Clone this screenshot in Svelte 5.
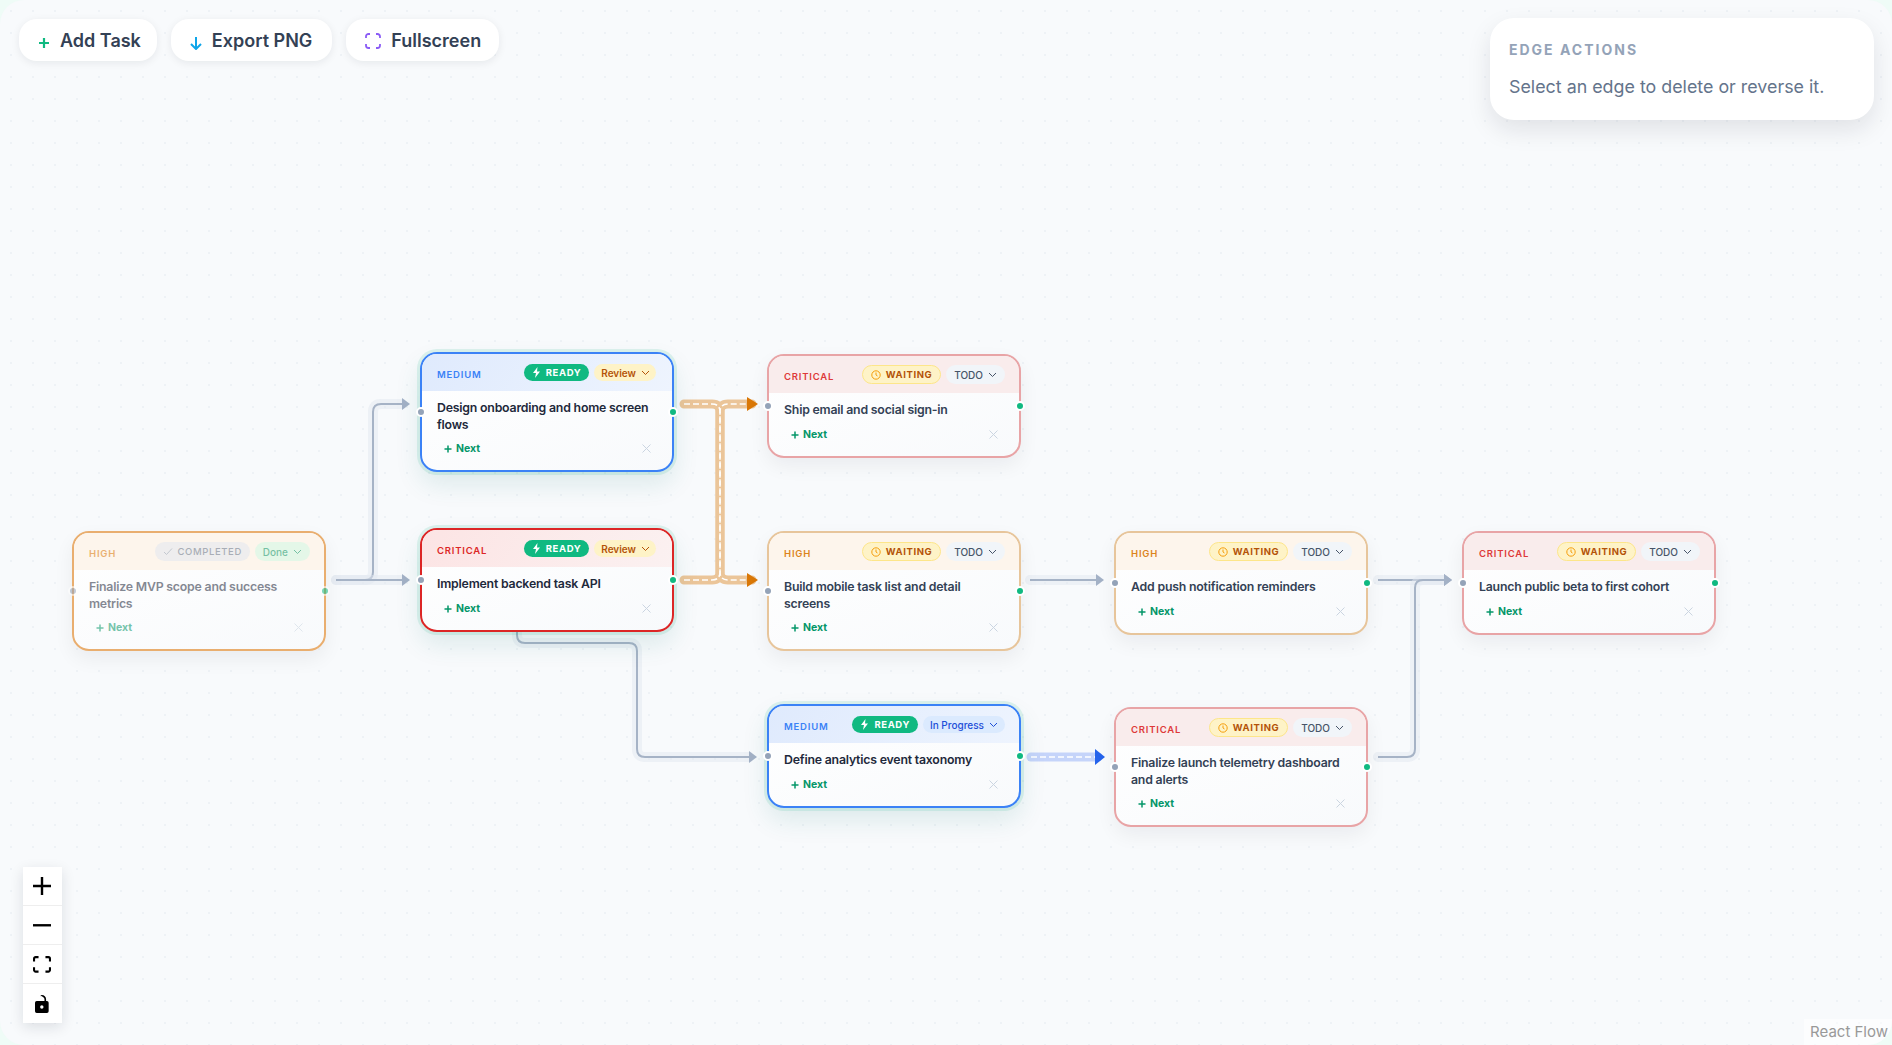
<script>
  // canvas contents, in screen pixels
  const nodes = [
    { id: 1, x: 72, y: 531, priority: 'HIGH', tone: 'high', state: 'completed', status: 'Done', statusKind: 'done', title: 'Finalize MVP scope and success metrics' },
    { id: 2, x: 420, y: 352, priority: 'MEDIUM', tone: 'medium', state: 'ready', status: 'Review', statusKind: 'review', title: 'Design onboarding and home screen flows' },
    { id: 3, x: 420, y: 528, priority: 'CRITICAL', tone: 'critical', state: 'ready', status: 'Review', statusKind: 'review', title: 'Implement backend task API' },
    { id: 4, x: 767, y: 354, priority: 'CRITICAL', tone: 'critical', state: 'waiting', status: 'TODO', statusKind: 'todo', title: 'Ship email and social sign-in' },
    { id: 5, x: 767, y: 531, priority: 'HIGH', tone: 'high', state: 'waiting', status: 'TODO', statusKind: 'todo', title: 'Build mobile task list and detail screens' },
    { id: 6, x: 767, y: 704, priority: 'MEDIUM', tone: 'medium', state: 'ready', status: 'In Progress', statusKind: 'progress', title: 'Define analytics event taxonomy' },
    { id: 7, x: 1114, y: 531, priority: 'HIGH', tone: 'high', state: 'waiting', status: 'TODO', statusKind: 'todo', title: 'Add push notification reminders' },
    { id: 8, x: 1114, y: 707, priority: 'CRITICAL', tone: 'critical', state: 'waiting', status: 'TODO', statusKind: 'todo', title: 'Finalize launch telemetry dashboard and alerts' },
    { id: 9, x: 1462, y: 531, priority: 'CRITICAL', tone: 'critical', state: 'waiting', status: 'TODO', statusKind: 'todo', title: 'Launch public beta to first cohort' }
  ];

  const plainEdges = [
    { d: 'M336 580H365Q373 580 373 572V412Q373 404 381 404H402', tip: [410, 404] },
    { d: 'M336 580H402', tip: [410, 580] },
    { d: 'M517 631V635Q517 643 525 643H629Q637 643 637 651V749Q637 757 645 757H749', tip: [757, 757] },
    { d: 'M1030 580H1096', tip: [1104, 580] },
    { d: 'M1378 580H1444', tip: [1452, 580] },
    { d: 'M1378 757H1407Q1415 757 1415 749V588Q1415 580 1423 580H1444', tip: [1452, 580] }
  ];

  const orangeEdges = [
    'M684 404H712Q720 404 720 412V572Q720 580 728 580H752',
    'M684 580H712Q720 580 720 572V412Q720 404 728 404H752'
  ];

  const controls = ['plus', 'minus', 'fit', 'lock'];
</script>

<div class="canvas">
  <svg class="edges" width="1892" height="1045">
    {#each plainEdges as edge}
      <path class="halo" d={edge.d} />
      <path class="line" d={edge.d} />
      <path class="tip" d="M{edge.tip[0] - 8} {edge.tip[1] - 6}L{edge.tip[0]} {edge.tip[1]}L{edge.tip[0] - 8} {edge.tip[1] + 6}Z" />
    {/each}

    {#each orangeEdges as d}
      <path class="wide orange" {d} />
    {/each}
    {#each orangeEdges as d}
      <path class="dash" {d} />
    {/each}
    <path class="orange-tip" d="M747 397L758 404L747 411Z" />
    <path class="orange-tip" d="M747 573L758 580L747 587Z" />

    <path class="wide blue" d="M1031 757H1098" />
    <path class="dash" d="M1031 757H1096" />
    <path class="blue-tip" d="M1095 749L1105 757L1095 765Z" />
  </svg>

  <div class="toolbar">
    <button class="tool">
      <svg width="12" height="12" viewBox="0 0 12 12" class="low"><path d="M6 1v10M1 6h10" stroke="#10b981" stroke-width="2.2" fill="none" /></svg>
      Add Task
    </button>
    <button class="tool">
      <svg width="12" height="14" viewBox="0 0 12 14" class="low"><path d="M6 1v12M1 8l5 5 5-5" stroke="#0ea5e9" stroke-width="2" fill="none" /></svg>
      Export PNG
    </button>
    <button class="tool">
      <svg width="16" height="16" viewBox="0 0 16 16"><path d="M1 5V3.5A2.5 2.5 0 0 1 3.5 1H5M11 1h1.5A2.5 2.5 0 0 1 15 3.5V5M15 11v1.5a2.5 2.5 0 0 1-2.5 2.5H11M5 15H3.5A2.5 2.5 0 0 1 1 12.5V11" stroke="#8b5cf6" stroke-width="1.8" fill="none" /></svg>
      Fullscreen
    </button>
  </div>

  <div class="edge-panel">
    <div class="edge-title">EDGE ACTIONS</div>
    <div class="edge-text">Select an edge to delete or reverse it.</div>
  </div>

  {#each nodes as node (node.id)}
    <div class="node {node.tone} {node.state}" style="left: {node.x}px; top: {node.y}px">
      <span class="handle left"></span>
      <span class="handle right"></span>
      <div class="head">
        <span class="priority">{node.priority}</span>
        <span class="pills">
          <span class="pill state-pill">
            {#if node.state === 'ready'}
              <svg width="9" height="11" viewBox="0 0 9 11"><path d="M5.5 0L1 6h3L3 11l5-6.5H5z" fill="#fff" /></svg>
              READY
            {:else if node.state === 'waiting'}
              <svg width="10" height="10" viewBox="0 0 10 10"><circle cx="5" cy="5" r="4.2" stroke="#f59e0b" fill="none" /><path d="M5 2.5V5l1.5 1" stroke="#f59e0b" fill="none" /></svg>
              WAITING
            {:else}
              <svg width="10" height="9" viewBox="0 0 10 9"><path d="M1 5l2.5 2.5L9 1.5" stroke="#94a3b8" fill="none" /></svg>
              COMPLETED
            {/if}
          </span>
          <span class="pill status {node.statusKind}">
            {node.status}
            <svg width="9" height="6" viewBox="0 0 9 6"><path d="M1 1l3.5 3.5L8 1" stroke="currentColor" fill="none" /></svg>
          </span>
        </span>
      </div>
      <div class="body">
        <div class="title">{node.title}</div>
        <div class="foot">
          <span class="next">
            <svg width="8" height="8" viewBox="0 0 8 8" class="low"><path d="M4 .5v7M.5 4h7" stroke="currentColor" stroke-width="1.5" /></svg>
            Next
          </span>
          <svg class="remove" width="9" height="9" viewBox="0 0 9 9"><path d="M.5.5l8 8M8.5.5l-8 8" stroke="#cbd5e1" /></svg>
        </div>
      </div>
    </div>
  {/each}

  <div class="controls">
    {#each controls as c}
      <div class="control">
        {#if c === 'plus'}
          <svg viewBox="0 0 32 32" width="18" height="18"><path d="M32 18.133H18.133V32h-4.266V18.133H0v-4.266h13.867V0h4.266v13.867H32z" /></svg>
        {:else if c === 'minus'}
          <svg viewBox="0 0 32 5" width="18" height="3"><path d="M0 0h32v4.2H0z" /></svg>
        {:else if c === 'fit'}
          <svg viewBox="0 0 32 30" width="18" height="17"><path d="M3.692 4.63c0-.53.4-.938.939-.938h5.215V0H4.708C2.13 0 0 2.054 0 4.63v5.216h3.692V4.631zM27.354 0h-5.2v3.692h5.17c.53 0 .984.4.984.939v5.215H32V4.631A4.624 4.624 0 0027.354 0zm.954 24.83c0 .532-.4.94-.939.94h-5.215v3.768h5.215c2.577 0 4.631-2.13 4.631-4.707v-5.139h-3.692v5.139zm-23.677.94c-.531 0-.939-.4-.939-.94v-5.138H0v5.139c0 2.577 2.13 4.707 4.708 4.707h5.138V25.77H4.631z" /></svg>
        {:else}
          <svg viewBox="0 0 25 32" width="14" height="18"><path d="M21.333 10.667H19.81V7.619C19.81 3.429 16.38 0 12.19 0c-4.114 1.828-1.37 2.133.305 2.438 1.676.305 4.42 2.59 4.42 5.181v3.048H3.047A3.056 3.056 0 000 13.714v15.238A3.056 3.056 0 003.048 32h18.285a3.056 3.056 0 003.048-3.048V13.714a3.056 3.056 0 00-3.048-3.047zM12.19 24.533a3.056 3.056 0 01-3.047-3.047 3.056 3.056 0 013.047-3.048 3.056 3.056 0 013.048 3.048 3.056 3.056 0 01-3.048 3.047z" /></svg>
        {/if}
      </div>
    {/each}
  </div>

  <div class="attribution">React Flow</div>
</div>

<style>
  :global(body) {
    margin: 0;
    background: #effcf7;
    font-family: Inter, "Liberation Sans", sans-serif;
  }

  .canvas {
    position: relative;
    width: 1892px;
    height: 1045px;
    overflow: hidden;
    border-radius: 24px;
    background-color: #f8fafc;
    background-image: radial-gradient(#eef2f6 1px, transparent 1px);
    background-size: 22px 22px;
  }

  .edges {
    position: absolute;
    left: 0;
    top: 0;
    fill: none;
  }
  .halo {
    stroke: #e2e8f0;
    stroke-width: 10;
    stroke-opacity: 0.5;
    stroke-linecap: round;
    fill: none;
  }
  .line {
    stroke: #a6b3c6;
    stroke-width: 2;
    fill: none;
  }
  .tip {
    fill: #a3b1c6;
  }
  .wide {
    stroke-width: 9;
    stroke-linecap: round;
    fill: none;
  }
  .orange {
    stroke: #ebc599;
  }
  .blue {
    stroke: #c5d4fa;
  }
  .dash {
    stroke: #fff;
    stroke-width: 1.5;
    stroke-dasharray: 6 3;
    fill: none;
  }
  .orange-tip {
    fill: #d97706;
  }
  .blue-tip {
    fill: #2563eb;
  }

  .toolbar {
    position: absolute;
    left: 19px;
    top: 19px;
    display: flex;
    gap: 14px;
  }
  .tool {
    display: flex;
    align-items: center;
    gap: 10px;
    height: 42px;
    padding: 1px 18px 0 19px;
    border: none;
    border-radius: 18px;
    background: #fff;
    box-shadow: 0 2px 8px rgba(15, 23, 42, 0.08);
    color: #334155;
    font-family: inherit;
    font-size: 18px;
    font-weight: 600;
  }
  .tool:first-child {
    padding-right: 16px;
  }
  .tool:nth-child(2) {
    padding-right: 20px;
  }
  .tool .low {
    margin-top: 4px;
  }

  .edge-panel {
    position: absolute;
    left: 1490px;
    top: 18px;
    box-sizing: border-box;
    width: 384px;
    height: 102px;
    padding: 23px 19px;
    border-radius: 24px;
    background: #fff;
    box-shadow: 0 10px 24px rgba(15, 23, 42, 0.1);
  }
  .edge-title {
    color: #94a3b8;
    font-size: 14px;
    font-weight: 700;
    letter-spacing: 2px;
    line-height: 17px;
  }
  .edge-text {
    margin-top: 18px;
    color: #64748b;
    font-size: 17.85px;
    line-height: 22px;
  }

  .node {
    position: absolute;
    box-sizing: border-box;
    width: 254px;
    border: 2px solid;
    border-radius: 17px;
    background: linear-gradient(160deg, #fff, #f8fafc);
    box-shadow: 0 8px 20px rgba(15, 23, 42, 0.06);
  }
  .handle {
    position: absolute;
    top: 50%;
    width: 6px;
    height: 6px;
    margin-top: -5px;
    border: 2px solid #fff;
    border-radius: 50%;
  }
  .handle.left {
    left: -6px;
    background: #94a3b8;
  }
  .handle.right {
    right: -6px;
    background: #10b981;
  }

  .head {
    display: flex;
    align-items: center;
    justify-content: space-between;
    box-sizing: border-box;
    height: 37px;
    padding: 0 14px 0 15px;
    border-radius: 15px 15px 0 0;
  }
  .priority {
    margin-top: 3px;
    font-size: 9.5px;
    font-weight: 600;
    letter-spacing: 0.8px;
  }
  .pills {
    display: flex;
    align-items: center;
    gap: 5px;
  }
  .pill {
    display: flex;
    align-items: center;
    gap: 5px;
    height: 19px;
    padding: 0 8px;
    border-radius: 10px;
    font-size: 10px;
    font-weight: 600;
    white-space: nowrap;
  }
  .state-pill {
    font-size: 9.5px;
    font-weight: 700;
    letter-spacing: 0.6px;
  }

  .ready .state-pill {
    height: 17px;
    background: #10b981;
    color: #fff;
  }
  .ready .pill {
    height: 17px;
  }
  .waiting .state-pill {
    box-sizing: border-box;
    background: #fef3c7;
    border: 1px solid #fde68a;
    color: #b45309;
  }
  .completed .state-pill {
    background: #e2e8f0;
    color: #64748b;
    font-weight: 500;
  }
  .status.review {
    margin-right: 2px;
    padding: 0 6px 0 7px;
    background: #fef3c7;
    color: #b45309;
  }
  .status.todo {
    background: #f1f5f9;
    color: #475569;
    font-weight: 500;
  }
  .status.done {
    background: #d1fae5;
    color: #059669;
    font-weight: 500;
  }
  .status.progress {
    padding: 0 7px;
    background: #dbeafe;
    color: #1d4ed8;
    font-weight: 500;
  }

  .body {
    padding: 8px 15px 0;
  }
  .title {
    min-height: 18px;
    color: #1e293b;
    font-size: 12.3px;
    font-weight: 600;
    line-height: 17px;
    letter-spacing: -0.2px;
  }
  .foot {
    display: flex;
    align-items: center;
    justify-content: space-between;
    height: 16px;
    margin-top: 7px;
    margin-bottom: 14px;
    padding: 0 6px 0 7px;
  }
  .next {
    display: flex;
    align-items: center;
    gap: 4px;
    color: #059669;
    font-size: 10.5px;
    font-weight: 700;
  }
  .next .low {
    margin-top: 2px;
  }
  .remove {
    display: block;
  }

  /* tones */
  .critical {
    border-color: #dc2626;
  }
  .critical .priority {
    color: #dc2626;
  }
  .critical .head {
    background: linear-gradient(120deg, #fce4e4, #fbf1f1);
  }
  .medium {
    border-color: #3b82f6;
  }
  .medium .priority {
    color: #3b82f6;
  }
  .medium .head {
    background: linear-gradient(120deg, #dfeafd, #eef4fe);
  }
  .high {
    border-color: #e9ae6f;
  }
  .high .priority {
    color: #d97706;
  }
  .high .head {
    background: #fdf5ec;
  }

  /* waiting cards are washed out */
  .waiting.critical {
    border-color: #e8a4a6;
  }
  .waiting.critical .head {
    background: #f9ecec;
  }
  .waiting.high {
    border-color: #e7c59b;
  }
  .waiting .title {
    color: #334155;
  }
  .waiting .priority {
    opacity: 0.9;
  }

  .ready {
    box-shadow: 0 0 0 3px rgba(16, 185, 129, 0.12), 0 12px 26px rgba(15, 118, 110, 0.12);
  }

  .completed .priority,
  .completed .title,
  .completed .next,
  .completed .pills,
  .completed .remove,
  .completed .handle {
    opacity: 0.55;
  }

  .controls {
    position: absolute;
    left: 23px;
    top: 867px;
    background: #fff;
    box-shadow: 0 4px 14px rgba(15, 23, 42, 0.12);
  }
  .control {
    display: flex;
    align-items: center;
    justify-content: center;
    box-sizing: border-box;
    width: 39px;
    height: 39px;
    padding-right: 1px;
    border-bottom: 1px solid #eee;
  }
  .control:last-child {
    border-bottom: none;
  }

  .attribution {
    position: absolute;
    right: 0;
    bottom: 0;
    padding: 3px 4px 3px 6px;
    background: rgba(255, 255, 255, 0.5);
    color: #999;
    font-size: 15px;
    line-height: 20px;
  }
</style>
